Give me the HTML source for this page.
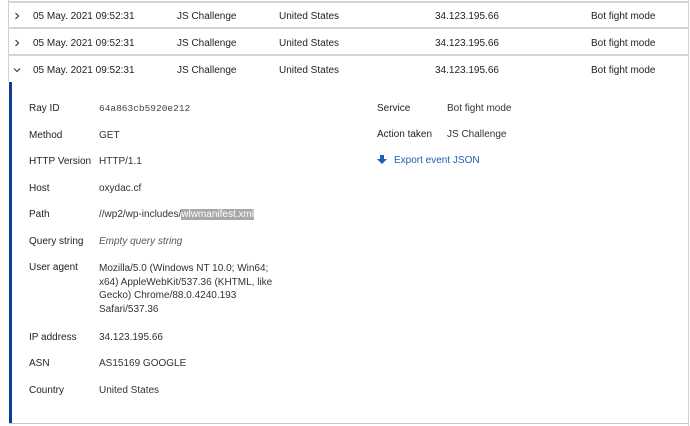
<!DOCTYPE html><html><head><style>
body{margin:0;width:690px;height:426px;background:#fff;font-family:"Liberation Sans",sans-serif;font-size:10px;color:#222;position:relative;overflow:hidden}
.a{position:absolute;white-space:nowrap}
div.a:not(.x){margin-top:2px}
.hl{position:absolute;left:8px;right:2px;height:2px;background:#d6d6d6}
.b{color:#333}
</style></head><body>
<div class="a x" style="left:8px;top:0;width:1px;height:82px;background:#d0d0d0"></div>
<div class="a x" style="left:688px;top:0;width:1px;height:426px;background:#d0d0d0"></div>
<div class="hl" style="top:1px"></div>
<div class="hl" style="top:27px"></div>
<div class="hl" style="top:54px"></div>
<div class="a x" style="left:9px;top:82px;width:3px;height:342px;background:#0b3d91"></div>
<div class="a x" style="left:9px;top:423px;width:680px;height:1px;background:#c8c8c8"></div>

<svg class="a" style="left:14px;top:12px" width="6" height="8"><path d="M1.5 1 L4.5 4 L1.5 7" stroke="#333" stroke-width="1.1" fill="none"/></svg>
<svg class="a" style="left:14px;top:39px" width="6" height="8"><path d="M1.5 1 L4.5 4 L1.5 7" stroke="#333" stroke-width="1.1" fill="none"/></svg>
<svg class="a" style="left:13px;top:67px" width="8" height="6"><path d="M1 1.5 L4 4.5 L7 1.5" stroke="#333" stroke-width="1.1" fill="none"/></svg>

<div class="a" style="left:33px;top:9px">05 May. 2021 09:52:31</div><div class="a" style="left:177px;top:9px">JS Challenge</div><div class="a" style="left:279px;top:9px">United States</div><div class="a" style="left:435px;top:9px">34.123.195.66</div><div class="a" style="left:591px;top:9px">Bot fight mode</div>
<div class="a" style="left:33px;top:36px">05 May. 2021 09:52:31</div><div class="a" style="left:177px;top:36px">JS Challenge</div><div class="a" style="left:279px;top:36px">United States</div><div class="a" style="left:435px;top:36px">34.123.195.66</div><div class="a" style="left:591px;top:36px">Bot fight mode</div>
<div class="a" style="left:33px;top:63px">05 May. 2021 09:52:31</div><div class="a" style="left:177px;top:63px">JS Challenge</div><div class="a" style="left:279px;top:63px">United States</div><div class="a" style="left:435px;top:63px">34.123.195.66</div><div class="a" style="left:591px;top:63px">Bot fight mode</div>

<div class="a" style="left:29px;top:101px">Ray ID</div><div class="a" style="left:99px;top:101px;font-family:'Liberation Mono',monospace;font-size:9.5px;color:#444">64a863cb5920e212</div>
<div class="a" style="left:29px;top:128px">Method</div><div class="a b" style="left:99px;top:128px">GET</div>
<div class="a" style="left:29px;top:154px">HTTP Version</div><div class="a b" style="left:99px;top:154px">HTTP/1.1</div>
<div class="a" style="left:29px;top:181px">Host</div><div class="a b" style="left:99px;top:181px">oxydac.cf</div>
<div class="a" style="left:29px;top:207px">Path</div><div class="a b" style="left:99px;top:207px">//wp2/wp-includes/<span style="background:#a8a8a8;color:#fff">wlwmanifest.xml</span></div>
<div class="a" style="left:29px;top:234px">Query string</div><div class="a b" style="left:99px;top:234px;font-style:italic;color:#555">Empty query string</div>
<div class="a" style="left:29px;top:260px">User agent</div><div class="a b" style="left:99px;top:260px;line-height:13.5px">Mozilla/5.0 (Windows NT 10.0; Win64;<br>x64) AppleWebKit/537.36 (KHTML, like<br>Gecko) Chrome/88.0.4240.193<br>Safari/537.36</div>
<div class="a" style="left:29px;top:330px">IP address</div><div class="a b" style="left:99px;top:330px">34.123.195.66</div>
<div class="a" style="left:29px;top:356px">ASN</div><div class="a b" style="left:99px;top:356px">AS15169 GOOGLE</div>
<div class="a" style="left:29px;top:383px">Country</div><div class="a b" style="left:99px;top:383px">United States</div>

<div class="a" style="left:377px;top:101px">Service</div><div class="a b" style="left:447px;top:101px">Bot fight mode</div>
<div class="a" style="left:377px;top:127px">Action taken</div><div class="a b" style="left:447px;top:127px">JS Challenge</div>
<svg class="a" style="left:377px;top:155px" width="10" height="10"><path d="M3 0h4v4h3L5 9 0 4h3z" fill="#1d5fb8"/></svg>
<div class="a" style="left:394px;top:153px;color:#1d5fb8">Export event JSON</div>
</body></html>
